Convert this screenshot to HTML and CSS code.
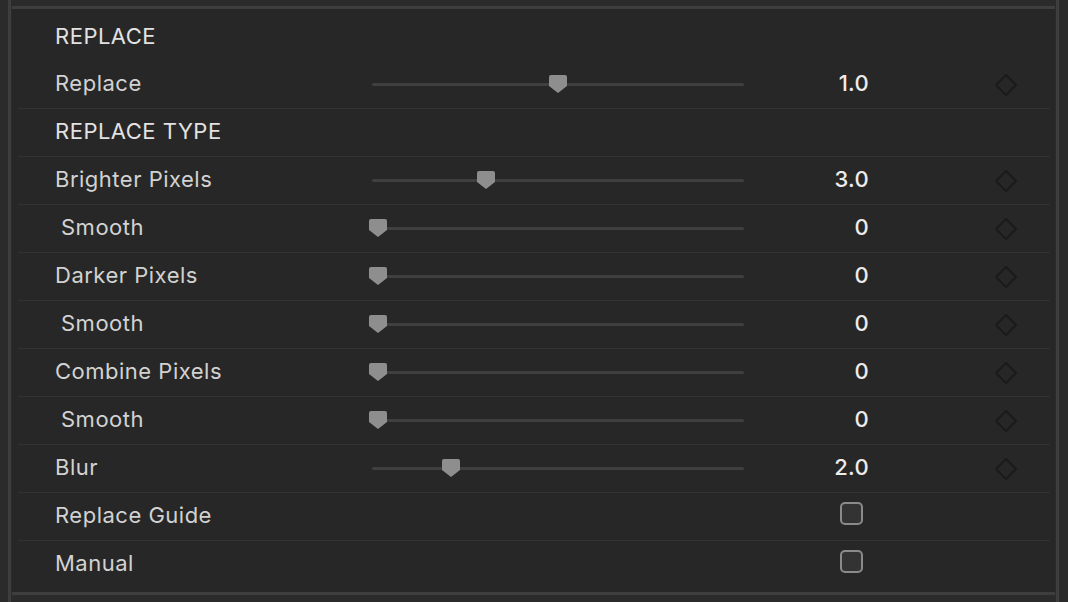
FILE: index.html
```html
<!DOCTYPE html>
<html lang="en">
<head>
    <meta charset="UTF-8">
    <title>Replace</title>
    <link rel="stylesheet" href="styles.css">
</head>
<body>
    <div class="frame">
        <div class="side-bar"></div>
        <div class="panel">
            <div class="row header">
                <span class="label">REPLACE</span>
            </div>

            <div class="row">
                <span class="label">Replace</span>
                <div class="slider"><svg class="thumb" style="left: 177px" viewBox="0 0 18 18"><path d="M2 0 H16 Q18 0 18 2 V11 L9 18 L0 11 V2 Q0 0 2 0 Z"/></svg></div>
                <span class="value">1.0</span>
                <svg class="key" viewBox="0 0 22 22"><polygon points="11,1 21,11 11,21 1,11"/></svg>
            </div>

            <div class="row header">
                <span class="label">REPLACE TYPE</span>
            </div>

            <div class="row">
                <span class="label">Brighter Pixels</span>
                <div class="slider"><svg class="thumb" style="left: 105px" viewBox="0 0 18 18"><path d="M2 0 H16 Q18 0 18 2 V11 L9 18 L0 11 V2 Q0 0 2 0 Z"/></svg></div>
                <span class="value">3.0</span>
                <svg class="key" viewBox="0 0 22 22"><polygon points="11,1 21,11 11,21 1,11"/></svg>
            </div>

            <div class="row">
                <span class="label sub">Smooth</span>
                <div class="slider"><svg class="thumb" style="left: -3px" viewBox="0 0 18 18"><path d="M2 0 H16 Q18 0 18 2 V11 L9 18 L0 11 V2 Q0 0 2 0 Z"/></svg></div>
                <span class="value">0</span>
                <svg class="key" viewBox="0 0 22 22"><polygon points="11,1 21,11 11,21 1,11"/></svg>
            </div>

            <div class="row">
                <span class="label">Darker Pixels</span>
                <div class="slider"><svg class="thumb" style="left: -3px" viewBox="0 0 18 18"><path d="M2 0 H16 Q18 0 18 2 V11 L9 18 L0 11 V2 Q0 0 2 0 Z"/></svg></div>
                <span class="value">0</span>
                <svg class="key" viewBox="0 0 22 22"><polygon points="11,1 21,11 11,21 1,11"/></svg>
            </div>

            <div class="row">
                <span class="label sub">Smooth</span>
                <div class="slider"><svg class="thumb" style="left: -3px" viewBox="0 0 18 18"><path d="M2 0 H16 Q18 0 18 2 V11 L9 18 L0 11 V2 Q0 0 2 0 Z"/></svg></div>
                <span class="value">0</span>
                <svg class="key" viewBox="0 0 22 22"><polygon points="11,1 21,11 11,21 1,11"/></svg>
            </div>

            <div class="row">
                <span class="label">Combine Pixels</span>
                <div class="slider"><svg class="thumb" style="left: -3px" viewBox="0 0 18 18"><path d="M2 0 H16 Q18 0 18 2 V11 L9 18 L0 11 V2 Q0 0 2 0 Z"/></svg></div>
                <span class="value">0</span>
                <svg class="key" viewBox="0 0 22 22"><polygon points="11,1 21,11 11,21 1,11"/></svg>
            </div>

            <div class="row">
                <span class="label sub">Smooth</span>
                <div class="slider"><svg class="thumb" style="left: -3px" viewBox="0 0 18 18"><path d="M2 0 H16 Q18 0 18 2 V11 L9 18 L0 11 V2 Q0 0 2 0 Z"/></svg></div>
                <span class="value">0</span>
                <svg class="key" viewBox="0 0 22 22"><polygon points="11,1 21,11 11,21 1,11"/></svg>
            </div>

            <div class="row">
                <span class="label">Blur</span>
                <div class="slider"><svg class="thumb" style="left: 70px" viewBox="0 0 18 18"><path d="M2 0 H16 Q18 0 18 2 V11 L9 18 L0 11 V2 Q0 0 2 0 Z"/></svg></div>
                <span class="value">2.0</span>
                <svg class="key" viewBox="0 0 22 22"><polygon points="11,1 21,11 11,21 1,11"/></svg>
            </div>

            <div class="row">
                <span class="label">Replace Guide</span>
                <span></span>
                <span class="check"></span>
            </div>

            <div class="row last">
                <span class="label">Manual</span>
                <span></span>
                <span class="check"></span>
            </div>
        </div>
        <div class="side-bar"></div>
    </div>
</body>
</html>
```

FILE: styles.css
```css
/* General */
body {
    margin: 0;
    background-color: #2b2b2b;
    font-family: Inter, "Liberation Sans", sans-serif;
    color: #d2d2d2;
    height: 602px;
    overflow: hidden;
}

.frame {
    display: flex;
    height: 100%;
    padding-left: 8px;
    gap: 1px;
}

.side-bar {
    width: 3px;
    background-color: #3e3e3e;
}

/* Panel */
.panel {
    box-sizing: border-box;
    width: 1043px;
    height: 589px;
    margin-top: 6px;
    background-color: #272727;
    border-top: 3px solid #3e3e3e;
    border-bottom: 3px solid #3e3e3e;
    padding: 4px 5px 3px 6px;
}

.row {
    display: grid;
    grid-template-columns: 317px 372px 125px 126px 22px;
    align-items: center;
    height: 47px;
    padding-left: 37px;
    border-bottom: 1px solid #333333;
    font-size: 22px;
    letter-spacing: 0.5px;
}

.row.header:first-child {
    height: 48px;
    border-bottom: none;
}

.row.last {
    border-bottom: none;
}

.label {
    white-space: nowrap;
    padding-bottom: 3px;
}

.header .label {
    color: #e2e2e2;
}

.label.sub {
    padding-left: 6px;
}

/* Slider */
.slider {
    position: relative;
    height: 3px;
    border-radius: 2px;
    background-color: #3f3f3f;
}

.thumb {
    position: absolute;
    top: -8px;
    width: 18px;
    height: 18px;
    fill: #8e8e8e;
}

.value {
    text-align: right;
    color: #ececec;
    font-weight: 500;
    letter-spacing: 0.3px;
    padding-bottom: 3px;
}

.key {
    grid-column: 5;
    width: 22px;
    height: 22px;
    fill: none;
    stroke: #1b1b1b;
    stroke-width: 2;
}

/* Checkbox */
.check {
    justify-self: end;
    margin-right: 6px;
    margin-top: -7px;
    width: 19px;
    height: 19px;
    border: 2px solid #8a8a8a;
    border-radius: 5px;
    background-color: #333333;
}
```
